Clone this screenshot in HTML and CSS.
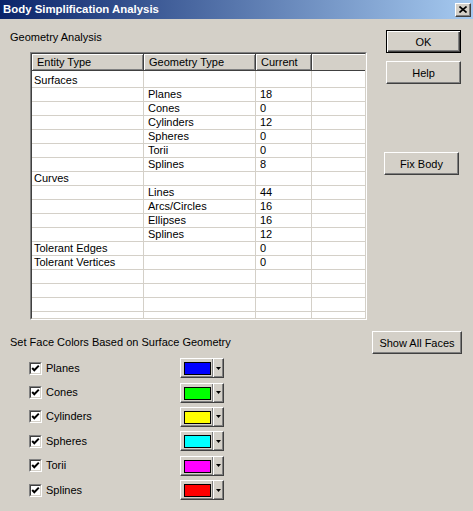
FILE: index.html
```html
<!DOCTYPE html>
<html>
<head>
<meta charset="utf-8">
<title>Body Simplification Analysis</title>
<link rel="stylesheet" href="styles.css">
</head>
<body>
<div class="dialog">
  <div class="titlebar">
    <span class="title">Body Simplification Analysis</span>
    <span class="close"><svg width="8" height="7" viewBox="0 0 8 7"><path d="M0.5 0.5 L7.5 6.5 M7.5 0.5 L0.5 6.5" stroke="#000" stroke-width="1.6" fill="none"/></svg></span>
  </div>

  <div class="top">
    <div class="left">
      <div class="label">Geometry Analysis</div>
      <div class="lv-outer">
        <div class="lv">
          <div class="lv-row lv-head">
            <div class="hc">Entity Type</div>
            <div class="hc">Geometry Type</div>
            <div class="hc">Current</div>
            <div class="hc hc4"></div>
          </div>
          <div class="lv-row first"><div class="c c1">Surfaces</div><div class="c"></div><div class="c"></div><div class="c c4"></div></div>
          <div class="lv-row"><div class="c c1"></div><div class="c">Planes</div><div class="c">18</div><div class="c c4"></div></div>
          <div class="lv-row"><div class="c c1"></div><div class="c">Cones</div><div class="c">0</div><div class="c c4"></div></div>
          <div class="lv-row"><div class="c c1"></div><div class="c">Cylinders</div><div class="c">12</div><div class="c c4"></div></div>
          <div class="lv-row"><div class="c c1"></div><div class="c">Spheres</div><div class="c">0</div><div class="c c4"></div></div>
          <div class="lv-row"><div class="c c1"></div><div class="c">Torii</div><div class="c">0</div><div class="c c4"></div></div>
          <div class="lv-row"><div class="c c1"></div><div class="c">Splines</div><div class="c">8</div><div class="c c4"></div></div>
          <div class="lv-row"><div class="c c1">Curves</div><div class="c"></div><div class="c"></div><div class="c c4"></div></div>
          <div class="lv-row"><div class="c c1"></div><div class="c">Lines</div><div class="c">44</div><div class="c c4"></div></div>
          <div class="lv-row"><div class="c c1"></div><div class="c">Arcs/Circles</div><div class="c">16</div><div class="c c4"></div></div>
          <div class="lv-row"><div class="c c1"></div><div class="c">Ellipses</div><div class="c">16</div><div class="c c4"></div></div>
          <div class="lv-row"><div class="c c1"></div><div class="c">Splines</div><div class="c">12</div><div class="c c4"></div></div>
          <div class="lv-row"><div class="c c1">Tolerant Edges</div><div class="c"></div><div class="c">0</div><div class="c c4"></div></div>
          <div class="lv-row"><div class="c c1">Tolerant Vertices</div><div class="c"></div><div class="c">0</div><div class="c c4"></div></div>
          <div class="lv-row"><div class="c c1"></div><div class="c"></div><div class="c"></div><div class="c c4"></div></div>
          <div class="lv-row"><div class="c c1"></div><div class="c"></div><div class="c"></div><div class="c c4"></div></div>
          <div class="lv-row"><div class="c c1"></div><div class="c"></div><div class="c"></div><div class="c c4"></div></div>
          <div class="lv-row"><div class="c c1"></div><div class="c"></div><div class="c"></div><div class="c c4"></div></div>
          <div class="lv-row"><div class="c c1"></div><div class="c"></div><div class="c"></div><div class="c c4"></div></div>
        </div>
      </div>
    </div>
    <div class="right">
      <button class="btn default">OK</button>
      <button class="btn help">Help</button>
      <button class="btn fix">Fix Body</button>
    </div>
  </div>

  <div class="colors-head">
    <span class="label2">Set Face Colors Based on Surface Geometry</span>
    <button class="btn show">Show All Faces</button>
  </div>

  <div class="colors">
    <div class="crow">
      <span class="cb"><span class="cb-in"><svg width="9" height="9" viewBox="0 0 9 9"><path d="M1.2 4 L3.3 6.2 L7.8 1.6" stroke="#000" stroke-width="2" fill="none"/></svg></span></span>
      <span class="cname">Planes</span>
      <span class="cbtn"><span class="sw-part"><span class="sw blue"></span></span><span class="arr-part"><svg width="5" height="3" viewBox="0 0 5 3"><path d="M0 0H5L2.5 3Z" fill="#000"/></svg></span></span>
    </div>
    <div class="crow">
      <span class="cb"><span class="cb-in"><svg width="9" height="9" viewBox="0 0 9 9"><path d="M1.2 4 L3.3 6.2 L7.8 1.6" stroke="#000" stroke-width="2" fill="none"/></svg></span></span>
      <span class="cname">Cones</span>
      <span class="cbtn"><span class="sw-part"><span class="sw green"></span></span><span class="arr-part"><svg width="5" height="3" viewBox="0 0 5 3"><path d="M0 0H5L2.5 3Z" fill="#000"/></svg></span></span>
    </div>
    <div class="crow">
      <span class="cb"><span class="cb-in"><svg width="9" height="9" viewBox="0 0 9 9"><path d="M1.2 4 L3.3 6.2 L7.8 1.6" stroke="#000" stroke-width="2" fill="none"/></svg></span></span>
      <span class="cname">Cylinders</span>
      <span class="cbtn"><span class="sw-part"><span class="sw yellow"></span></span><span class="arr-part"><svg width="5" height="3" viewBox="0 0 5 3"><path d="M0 0H5L2.5 3Z" fill="#000"/></svg></span></span>
    </div>
    <div class="crow">
      <span class="cb"><span class="cb-in"><svg width="9" height="9" viewBox="0 0 9 9"><path d="M1.2 4 L3.3 6.2 L7.8 1.6" stroke="#000" stroke-width="2" fill="none"/></svg></span></span>
      <span class="cname">Spheres</span>
      <span class="cbtn"><span class="sw-part"><span class="sw cyan"></span></span><span class="arr-part"><svg width="5" height="3" viewBox="0 0 5 3"><path d="M0 0H5L2.5 3Z" fill="#000"/></svg></span></span>
    </div>
    <div class="crow">
      <span class="cb"><span class="cb-in"><svg width="9" height="9" viewBox="0 0 9 9"><path d="M1.2 4 L3.3 6.2 L7.8 1.6" stroke="#000" stroke-width="2" fill="none"/></svg></span></span>
      <span class="cname">Torii</span>
      <span class="cbtn"><span class="sw-part"><span class="sw magenta"></span></span><span class="arr-part"><svg width="5" height="3" viewBox="0 0 5 3"><path d="M0 0H5L2.5 3Z" fill="#000"/></svg></span></span>
    </div>
    <div class="crow">
      <span class="cb"><span class="cb-in"><svg width="9" height="9" viewBox="0 0 9 9"><path d="M1.2 4 L3.3 6.2 L7.8 1.6" stroke="#000" stroke-width="2" fill="none"/></svg></span></span>
      <span class="cname">Splines</span>
      <span class="cbtn"><span class="sw-part"><span class="sw red"></span></span><span class="arr-part"><svg width="5" height="3" viewBox="0 0 5 3"><path d="M0 0H5L2.5 3Z" fill="#000"/></svg></span></span>
    </div>
  </div>
</div>
</body>
</html>
```
FILE: styles.css
```css
* { box-sizing: border-box; }
html, body { margin: 0; padding: 0; }
body {
  background: #d4d0c8;
  font: 11px/13px "Liberation Sans", Arial, sans-serif;
  color: #000;
  width: 473px;
  height: 511px;
  overflow: hidden;
}
.dialog { width: 473px; }

.titlebar {
  height: 19px;
  background: linear-gradient(to right, #0a246a, #a6caf0);
  display: flex;
  align-items: center;
  justify-content: space-between;
  padding: 0 2px 0 3px;
}
.title { color: #fff; font-weight: bold; font-size: 11.4px; line-height: 19px; }
.close {
  width: 16px;
  height: 14px;
  background: #d4d0c8;
  border: 1px solid;
  border-color: #fff #404040 #404040 #fff;
  box-shadow: inset -1px -1px 0 #808080;
  display: flex;
  align-items: center;
  justify-content: center;
}
.close svg { display: block; }

.top { display: flex; }
.left { width: 367px; flex: none; }
.label { margin: 12px 0 0 10px; height: 13px; }

.lv-outer {
  margin: 8px 0 0 30px;
  width: 337px;
  height: 268px;
  border: 1px solid;
  border-color: #808080 #fff #fff #808080;
}
.lv {
  height: 100%;
  border: 1px solid;
  border-color: #404040 #d4d0c8 #d4d0c8 #404040;
  background: #fff;
  overflow: hidden;
}
.lv-row {
  display: grid;
  grid-template-columns: 112px 112px 56px 53px;
  height: 14px;
}
.lv-head { height: 17px; }
.hc {
  background: #d4d0c8;
  border-right: 1px solid #404040;
  border-bottom: 1px solid #404040;
  box-shadow: inset 1px 1px 0 #fff, inset -1px -1px 0 #808080;
  padding-left: 5px;
  line-height: 16px;
  white-space: nowrap;
}
.hc4 { border-right: 0; box-shadow: inset 1px 1px 0 #fff; }
.lv-row.first { height: 17px; }
.lv-row.first .c { padding-top: 3px; }
.c {
  border-right: 1px solid #d4d0c8;
  border-bottom: 1px solid #d4d0c8;
  padding-left: 4px;
  white-space: nowrap;
  line-height: 13px;
}
.c.c1 { padding-left: 2px; }
.c.c4 { border-right: 0; }

.right {
  display: flex;
  flex-direction: column;
  align-items: flex-start;
  margin-left: 19px;
  padding-top: 11px;
}
.btn {
  width: 75px;
  height: 23px;
  font: 11px "Liberation Sans", Arial, sans-serif;
  color: #000;
  background: #d4d0c8;
  border: 1px solid;
  border-color: #fff #404040 #404040 #fff;
  box-shadow: inset -1px -1px 0 #808080;
  padding: 0;
  margin: 0;
}
.btn.default {
  border-color: #000;
  box-shadow: inset 1px 1px 0 #fff, inset -1px -1px 0 #404040, inset -2px -2px 0 #808080;
}
.help { margin-top: 8px; }
.fix { margin-top: 68px; margin-left: -2px; }

.colors-head {
  display: flex;
  justify-content: space-between;
  align-items: center;
  margin-top: 11px;
  padding: 0 11px 0 10px;
}
.btn.show { width: 90px; }

.colors { margin-top: 2px; }
.crow {
  display: flex;
  align-items: center;
  height: 24.4px;
  padding-left: 29px;
}
.cb {
  flex: none;
  width: 13px;
  height: 13px;
  border: 1px solid;
  border-color: #808080 #fff #fff #808080;
}
.cb-in {
  display: block;
  width: 11px;
  height: 11px;
  border: 1px solid;
  border-color: #404040 #d4d0c8 #d4d0c8 #404040;
  background: #fff;
}
.cb-in svg { display: block; }
.cname { width: 138px; padding-left: 4px; flex: none; }
.cbtn {
  display: flex;
  flex: none;
  width: 44px;
  height: 20px;
  background: #d4d0c8;
  border: 1px solid;
  border-color: #fff #404040 #404040 #fff;
  box-shadow: inset -1px -1px 0 #808080;
}
.sw-part {
  width: 32px;
  height: 18px;
  border-right: 1px solid #808080;
  padding: 3px 0 0 3px;
}
.sw { display: block; width: 27px; height: 13px; border: 1px solid #000; }
.sw.blue { background: #0000ff; }
.sw.green { background: #00ff00; }
.sw.yellow { background: #ffff00; }
.sw.cyan { background: #00ffff; }
.sw.magenta { background: #ff00ff; }
.sw.red { background: #ff0000; }
.arr-part {
  flex: 1;
  height: 18px;
  border-left: 1px solid #fff;
  display: flex;
  align-items: center;
  justify-content: center;
}
.arr-part svg { display: block; }
```
